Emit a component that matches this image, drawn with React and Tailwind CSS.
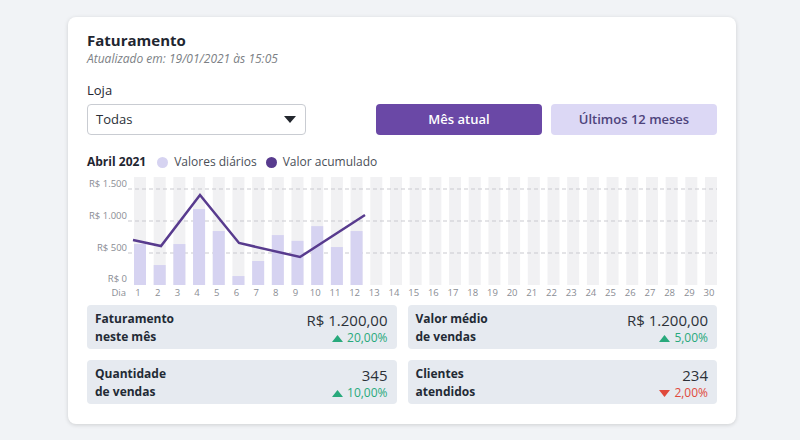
import React from 'react';

const daily = [640, 312, 640, 1187, 843, 140, 375, 780, 690, 920, 593, 843];
const linePts = [[46, 66], [74, 72], [113, 21], [152, 69], [213, 83], [278, 41]];

const barX = (i) => 53 + i * 19.69;
const yOf = (v) => 111 - (v / 500) * 32;

function Chart() {
  return (
    <svg width="630" height="126" className="block" style={{ fontFamily: '"Open Sans", sans-serif' }}>
      {Array.from({ length: 30 }).map((_, i) => (
        <rect key={'bg' + i} x={barX(i) - 6} y={3} width={12} height={108} fill="#f1f1f3" />
      ))}
      {[15, 47, 79].map((y) => (
        <line key={y} x1={41} x2={630} y1={y} y2={y} stroke="#c9c9cf" strokeWidth="1" strokeDasharray="4 3" />
      ))}
      {daily.map((v, i) => (
        <rect key={'d' + i} x={barX(i) - 6} y={yOf(v)} width={12} height={111 - yOf(v)} fill="#d6d3f1" />
      ))}
      <polyline
        points={linePts.map((p) => p.join(',')).join(' ')}
        fill="none"
        stroke="#583b8e"
        strokeWidth="2.5"
        strokeLinejoin="miter"
      />
      {[['R$ 1.500', 13], ['R$ 1.000', 45], ['R$ 500', 77], ['R$ 0', 108]].map(([t, y]) => (
        <text key={t} x={40} y={y} textAnchor="end" fontSize="9.5" fill="#8a8d94">{t}</text>
      ))}
      <text x={39} y={122} textAnchor="end" fontSize="9.5" fill="#8a8d94">Dia</text>
      {Array.from({ length: 30 }).map((_, i) => (
        <text key={'l' + i} x={barX(i) - 2} y={122} textAnchor="middle" fontSize="9.5" fill="#8a8d94">{i + 1}</text>
      ))}
    </svg>
  );
}

function Stat({ title, sub, value, pct, up }) {
  return (
    <div className="flex justify-between rounded bg-[#e6eaf0] pl-[8px] pr-[9px] pt-[5px] pb-[4px] h-[44px]">
      <div className="text-[12px] font-bold leading-[18px] text-[#232a35]">
        <div>{title}</div>
        <div>{sub}</div>
      </div>
      <div className="flex flex-col items-end">
        <div className="text-[15px] leading-[20px] text-[#2c3138]">{value}</div>
        <div className={'flex items-center gap-[4px] text-[12px] leading-[16px] ' + (up ? 'text-[#28a97c]' : 'text-[#e0493b]')}>
          <svg width="11" height="7" viewBox="0 0 11 7">
            <path d={up ? 'M0 7 H11 L5.5 0 Z' : 'M0 0 H11 L5.5 7 Z'} fill="currentColor" />
          </svg>
          {pct}
        </div>
      </div>
    </div>
  );
}

export default function App() {
  return (
    <div className="w-[800px] h-[440px] bg-[#f1f3f6] pt-[17px]" style={{ fontFamily: '"Open Sans", sans-serif' }}>
      <div className="ml-[68px] w-[668px] h-[407px] rounded-lg bg-white shadow-[0_1px_4px_rgba(0,0,0,0.15)] px-[19px] pt-[13px]">
        <h1 className="text-[15px] font-bold leading-[20px] text-[#1f2631]">Faturamento</h1>
        <p className="text-[12px] italic leading-[16px] text-[#7c7f85] mt-[1px]">Atualizado em: 19/01/2021 às 15:05</p>

        <div className="mt-[14px] flex items-end justify-between">
          <div>
            <div className="text-[13px] leading-[18px] text-[#1f2631] mb-[5px]">Loja</div>
            <div className="flex h-[31px] w-[219px] items-center justify-between rounded border border-[#c9ccd2] px-[8px] text-[13px] text-[#2a2f38]">
              Todas
              <svg width="12" height="7" viewBox="0 0 12 7" className="mr-[1px]">
                <path d="M0 0 H12 L6 7 Z" fill="#23272e" />
              </svg>
            </div>
          </div>
          <div className="flex gap-[9px]">
            <button className="h-[31px] w-[166px] rounded bg-[#6a48a6] text-[13px] font-semibold text-white">Mês atual</button>
            <button className="h-[31px] w-[166px] rounded bg-[#dcd8f5] text-[13px] font-semibold text-[#4e447c]">Últimos 12 meses</button>
          </div>
        </div>

        <div className="mt-[18px] flex items-center gap-[6px] text-[12px] leading-[18px]">
          <span className="font-bold text-[#1f2631] mr-[5px]">Abril 2021</span>
          <span className="h-[11px] w-[11px] rounded-full bg-[#d6d3f1]" />
          <span className="text-[#4a4f58] mr-[3px]">Valores diários</span>
          <span className="h-[11px] w-[11px] rounded-full bg-[#583b8e]" />
          <span className="text-[#4a4f58]">Valor acumulado</span>
        </div>

        <div className="mt-[3px]">
          <Chart />
        </div>

        <div className="mt-[5px] grid grid-cols-2 gap-x-[11px] gap-y-[11px]">
          <Stat title="Faturamento" sub="neste mês" value="R$ 1.200,00" pct="20,00%" up />
          <Stat title="Valor médio" sub="de vendas" value="R$ 1.200,00" pct="5,00%" up />
          <Stat title="Quantidade" sub="de vendas" value="345" pct="10,00%" up />
          <Stat title="Clientes" sub="atendidos" value="234" pct="2,00%" up={false} />
        </div>
      </div>
    </div>
  );
}
